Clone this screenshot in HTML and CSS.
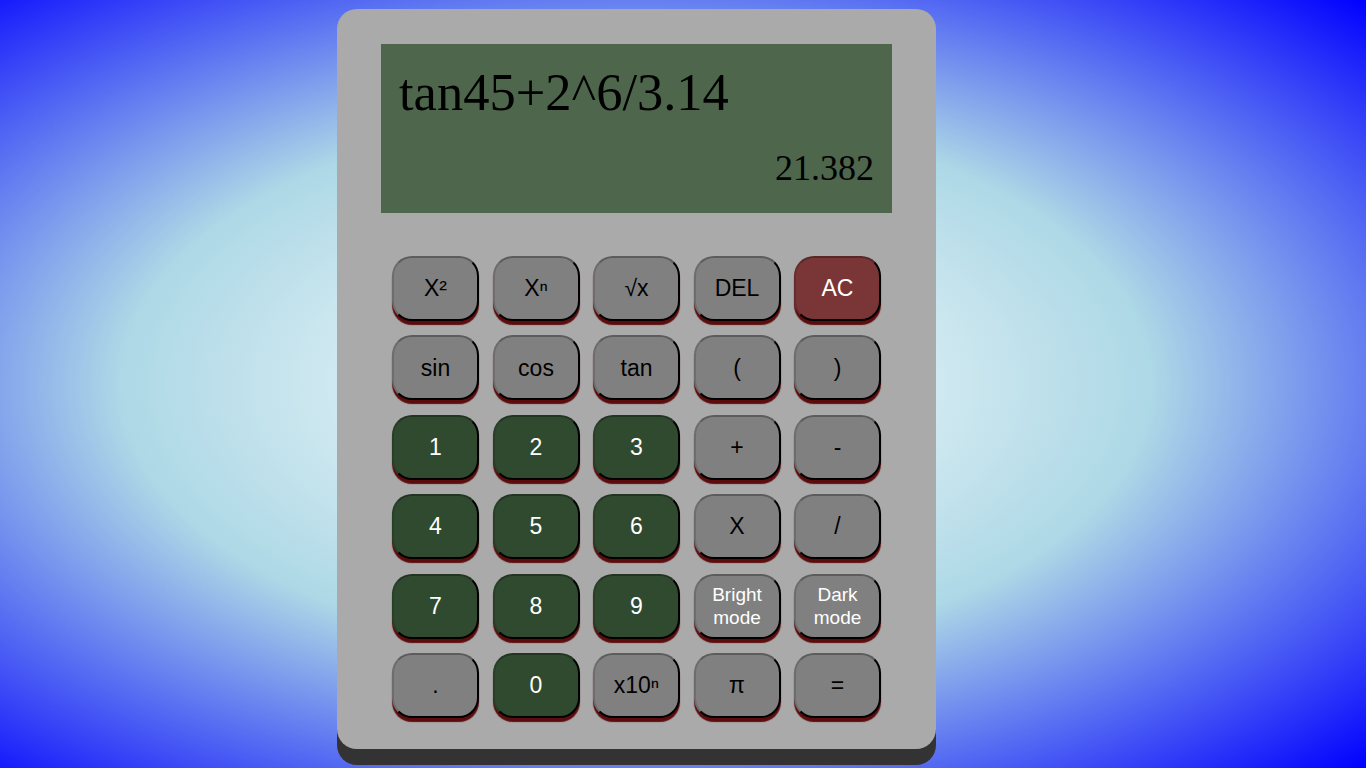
FILE: index.html
```html
<!DOCTYPE html>
<html lang="en">
<head>
<meta charset="utf-8">
<title>Calculator</title>
<link rel="stylesheet" href="styles.css">
</head>
<body>
<div class="stage">
  <div class="calculator">
    <div class="display">
      <div class="expression">tan45+2^6/3.14</div>
      <div class="result">21.382</div>
    </div>
    <div class="keys">
      <button class="key">X²</button>
      <button class="key">Xⁿ</button>
      <button class="key">√x</button>
      <button class="key">DEL</button>
      <button class="key key-red">AC</button>

      <button class="key">sin</button>
      <button class="key">cos</button>
      <button class="key">tan</button>
      <button class="key">(</button>
      <button class="key">)</button>

      <button class="key key-green">1</button>
      <button class="key key-green">2</button>
      <button class="key key-green">3</button>
      <button class="key">+</button>
      <button class="key">-</button>

      <button class="key key-green">4</button>
      <button class="key key-green">5</button>
      <button class="key key-green">6</button>
      <button class="key">X</button>
      <button class="key">/</button>

      <button class="key key-green">7</button>
      <button class="key key-green">8</button>
      <button class="key key-green">9</button>
      <button class="key key-mode">Bright<br>mode</button>
      <button class="key key-mode">Dark<br>mode</button>

      <button class="key">.</button>
      <button class="key key-green">0</button>
      <button class="key">x10ⁿ</button>
      <button class="key">π</button>
      <button class="key">=</button>
    </div>
  </div>
</div>
</body>
</html>
```

FILE: styles.css
```css
html, body {
  margin: 0;
  padding: 0;
  height: 100%;
}

body {
  background: radial-gradient(ellipse farthest-corner at 636px 384px, #ffffff 0%, #add8e6 50%, #0000ff 100%);
  overflow: hidden;
}

.stage {
  width: 1273px;
  padding-top: 9px;
  display: flex;
  justify-content: center;
}

.calculator {
  width: 599px;
  height: 740px;
  box-sizing: border-box;
  padding: 35px 44px 0;
  background: #aaaaaa;
  border-radius: 20px;
  box-shadow: 0 16px 0 #333333;
}

.display {
  height: 169px;
  box-sizing: border-box;
  padding: 18px 18px 24px;
  background: #4e664c;
  display: flex;
  flex-direction: column;
  justify-content: space-between;
  font-family: "Liberation Serif", "Times New Roman", serif;
  color: #000;
}

.expression {
  font-size: 52.5px;
  line-height: normal;
  white-space: nowrap;
}

.result {
  font-size: 36px;
  line-height: normal;
  text-align: right;
}

.keys {
  margin-top: 43px;
  padding: 0 11px;
  display: grid;
  grid-template-columns: repeat(5, 1fr);
  grid-auto-rows: 65px;
  column-gap: 13.5px;
  row-gap: 14.4px;
}

.key {
  box-sizing: border-box;
  margin: 0;
  padding: 0;
  border: 2px solid;
  border-color: rgba(0, 0, 0, 0.28) #000 #000 rgba(0, 0, 0, 0.15);
  border-radius: 20px;
  background: #808080;
  box-shadow: 0 4px 1px #5c0c0c;
  font-family: "Liberation Sans", Arial, sans-serif;
  font-size: 23px;
  color: #000;
  line-height: 1.15;
}

.key-green {
  background: #304a30;
  color: #fff;
}

.key-red {
  background: #7a3636;
  color: #fff;
}

.key-mode {
  color: #fff;
  font-size: 19px;
  line-height: 23px;
}
```
